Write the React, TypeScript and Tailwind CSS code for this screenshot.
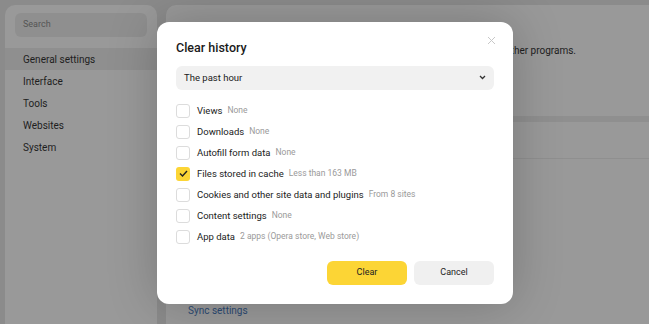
import React from "react";

const rows: { label: string; note: string; checked?: boolean }[] = [
  { label: "Views", note: "None" },
  { label: "Downloads", note: "None" },
  { label: "Autofill form data", note: "None" },
  { label: "Files stored in cache", note: "Less than 163 MB", checked: true },
  { label: "Cookies and other site data and plugins", note: "From 8 sites" },
  { label: "Content settings", note: "None" },
  { label: "App data", note: "2 apps (Opera store, Web store)" },
];

export default function App() {
  return (
    <div
      className="relative w-[649px] h-[324px] overflow-hidden bg-[#8b8b8b] flex gap-[9px] pl-[5px] pt-[5px]"
      style={{ fontFamily: "Roboto, 'Noto Sans', sans-serif" }}
    >
      {/* Sidebar */}
      <div className="w-[152px] h-[330px] bg-[#999999] rounded-tl-[10px] rounded-tr-[10px] flex flex-col">
        <div className="mx-[10px] mt-[8px] h-[24px] rounded-[6px] bg-[#8f8f8f] flex items-center pl-[8px] text-[9px] text-[#555]">
          Search
        </div>
        <div className="mt-[11px] flex flex-col">
          {["General settings", "Interface", "Tools", "Websites", "System"].map((t, i) => (
            <div
              key={t}
              className={`h-[22px] flex items-center pl-[18px] text-[10px] text-[#1e1e1e] ${i === 0 ? "bg-[#8f8f8f]" : ""}`}
            >
              {t}
            </div>
          ))}
        </div>
      </div>

      {/* Main */}
      <div className="flex-1 h-[330px] bg-[#999999] rounded-tl-[10px] flex flex-col">
        <div className="h-[111px] flex items-start">
          <div className="w-[410px] pt-[38px] text-right whitespace-nowrap text-[10px] text-[#1e1e1e]">
            Make Yandex Browser the default to open links from other programs.
          </div>
        </div>
        <div className="h-[6px] bg-[#8f8f8f]"></div>
        <div className="h-[36px]"></div>
        <div className="h-px bg-[#8f8f8f]"></div>
        <div className="flex-1 flex flex-col justify-end pb-[17px] pl-[22px] text-[10px] text-[#2c4a73]">
          Sync settings
        </div>
      </div>

      {/* Modal */}
      <div className="absolute left-[157px] top-[22px] w-[356px] h-[282px] bg-white rounded-[12px] shadow-[0_0_50px_rgba(0,0,0,0.22)] px-[19px] pt-[16px]">
        <div className="flex items-start justify-between">
          <div className="text-[12.5px] font-medium text-[#1a1a1a] mt-[1px]">Clear history</div>
          <svg width="9" height="9" viewBox="0 0 9 9" className="mt-[-2px] mr-[-2px]">
            <path d="M1 1L8 8M8 1L1 8" stroke="#c8c8c8" strokeWidth="1" />
          </svg>
        </div>
        <div className="mt-[8px] h-[24px] rounded-[6px] bg-[#f1f1f1] flex items-center justify-between pl-[8px] pr-[8px]">
          <span className="text-[9.5px] text-[#222]">The past hour</span>
          <svg width="7" height="5" viewBox="0 0 7 5">
            <path d="M1 1L3.5 3.5L6 1" stroke="#333" strokeWidth="1.3" fill="none" />
          </svg>
        </div>
        <div className="mt-[14px] flex flex-col gap-[7px]">
          {rows.map((r) => (
            <div key={r.label} className="flex items-center h-[14px]">
              {r.checked ? (
                <div className="w-[14px] h-[14px] rounded-[3px] bg-[#fcd535] flex items-center justify-center">
                  <svg width="9" height="7" viewBox="0 0 9 7">
                    <path d="M1 3.5L3.5 6L8 1" stroke="#222" strokeWidth="1.4" fill="none" />
                  </svg>
                </div>
              ) : (
                <div className="w-[14px] h-[14px] rounded-[3px] border border-[#dcdcdc] bg-white"></div>
              )}
              <span className="ml-[7px] text-[9.5px] text-[#222]">{r.label}</span>
              <span className="ml-[5px] text-[8.5px] text-[#9a9a9a]">{r.note}</span>
            </div>
          ))}
        </div>
        <div className="mt-[17px] flex justify-end gap-[7px]">
          <button className="w-[80px] h-[24px] rounded-[6px] bg-[#fcd535] text-[9px] text-[#222]">Clear</button>
          <button className="w-[80px] h-[24px] rounded-[6px] bg-[#f0f0f0] text-[9px] text-[#222]">Cancel</button>
        </div>
      </div>
    </div>
  );
}
